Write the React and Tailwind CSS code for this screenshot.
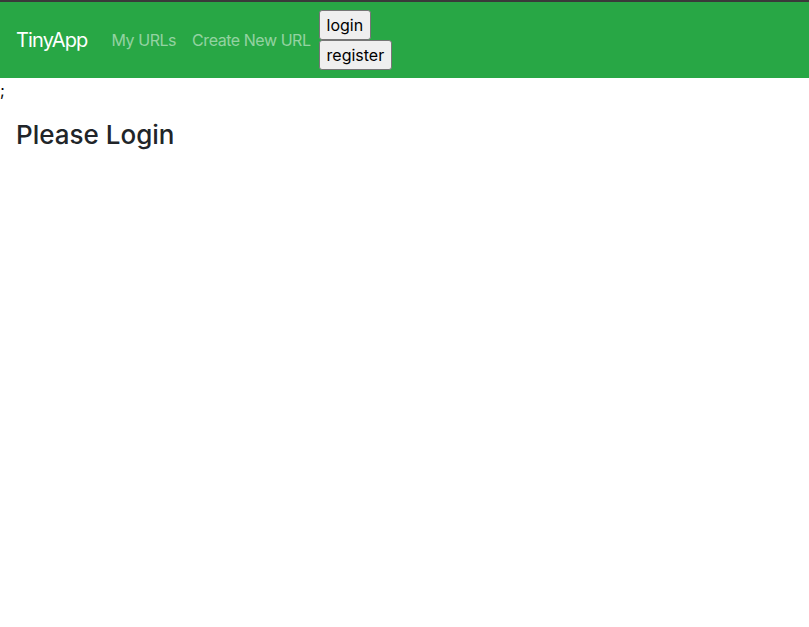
export default function App() {
  return (
    <div className="min-h-screen bg-white text-[#212529]" style={{ fontFamily: "Inter, 'Noto Sans', sans-serif" }}>
      <nav className="flex items-center border-t-2 border-[#3a3a3a] bg-[#28a745] px-4 py-2">
        <span className="mr-4 py-[5px] text-[20px] leading-[30px] tracking-[-0.85px] text-white">TinyApp</span>
        <a className="px-2 py-2 text-[16px] leading-6 tracking-[-0.45px] text-white/50">My URLs</a>
        <a className="px-2 py-2 text-[16px] leading-6 tracking-[-0.45px] text-white/50">Create New URL</a>
        <div className="flex flex-col items-start">
          <button className="h-[30px] rounded-[3px] border border-[#767676] bg-[#efefef] px-[7px] text-[16px] leading-5 text-black">login</button>
          <button className="h-[30px] rounded-[3px] border border-[#767676] bg-[#efefef] px-[7px] text-[16px] leading-5 text-black">register</button>
        </div>
      </nav>
      <div className="text-[16px] leading-6 text-black">;</div>
      <div className="px-4 pt-[17px]">
        <h2 className="text-[26px] font-medium leading-[1.2]">Please Login</h2>
      </div>
    </div>
  );
}
